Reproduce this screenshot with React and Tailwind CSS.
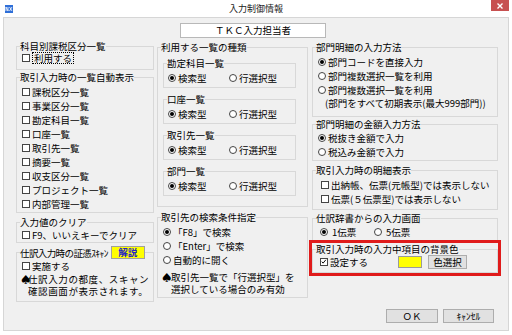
import React from "react";

function Box({ checked }) {
  return (
    <span className="relative inline-block w-[8px] h-[8px] border border-[#444] bg-white shrink-0">
      {checked && (
        <svg viewBox="0 0 8 8" className="absolute left-0 top-0 w-[6px] h-[6px]">
          <path d="M1 3.5 L2.8 5.5 L6.5 1" fill="none" stroke="#000" strokeWidth="1.3" />
        </svg>
      )}
    </span>
  );
}

function Radio({ on }) {
  return (
    <span className="inline-flex items-center justify-center w-[8px] h-[8px] rounded-full border border-[#444] bg-white shrink-0">
      {on && <span className="w-[4px] h-[4px] rounded-full bg-black" />}
    </span>
  );
}

function Check({ label, checked }) {
  return (
    <div className="flex items-center h-[14px] gap-[2px]">
      <Box checked={checked} />
      <span>{label}</span>
    </div>
  );
}

function RadioRow({ label, on }) {
  return (
    <div className="flex items-center h-[14px] gap-[2px]">
      <Radio on={on} />
      <span>{label}</span>
    </div>
  );
}

function Group({ legend, className, children }) {
  return (
    <fieldset className={className}>
      <legend className="ml-[3px] leading-[12px] whitespace-nowrap">{legend}</legend>
      {children}
    </fieldset>
  );
}

export default function App() {
  return (
    <div className="w-[512px] h-[335px] bg-white overflow-hidden text-[9.5px] text-black font-['Noto_Sans_CJK_JP','Noto_Sans',sans-serif]">
      {/* title bar */}
      <div className="h-[17px] flex items-start">
        <svg viewBox="0 0 8 8" className="ml-[5px] mt-[5px] w-[8px] h-[8px] shrink-0">
          <rect width="8" height="8" fill="#2f6fd8" />
          <path d="M1 6 V2 L3 6 V2 M4.5 2 L7 6 M7 2 L4.5 6" stroke="#fff" strokeWidth="0.8" fill="none" />
        </svg>
        <div className="flex-1 text-center pl-[8px] pt-[3px] leading-[12px] text-[9px] text-[#222]">入力制御情報</div>
        <div className="mr-[3px] w-[18px] h-[11px] bg-[#c75050] flex items-center justify-center">
          <svg viewBox="0 0 6 6" className="w-[6px] h-[6px]">
            <path d="M0.5 0.5 L5.5 5.5 M5.5 0.5 L0.5 5.5" stroke="#fff" strokeWidth="1.4" />
          </svg>
        </div>
      </div>

      {/* body */}
      <div className="mx-[3px] h-[314px] border border-[#d6d6d6] bg-[#f0f0f0]">
        <div className="mt-[5px] ml-[176px] w-[146px] h-[15px] border border-[#b8b8b8] bg-white flex items-center justify-center leading-[13px]">
          ＴＫＣ入力担当者
        </div>

        <div className="flex mt-[3px] pl-[12px]">
          {/* left column */}
          <div className="w-[138px] flex flex-col">
            <Group legend="科目別課税区分一覧" className="-mt-[1px] h-[30px] border border-[#d8d8d8]">
              <div className="pl-[5px] flex items-center h-[12px] gap-[2px]">
                <Box />
                <span className="border border-dotted border-black leading-[10px] px-[1px]">利用する</span>
              </div>
            </Group>
            <Group legend="取引入力時の一覧自動表示" className="mt-[1px] h-[142px] border border-[#d8d8d8]">
              <div className="pl-[5px] pt-[2px]">
                <Check label="課税区分一覧" />
                <Check label="事業区分一覧" />
                <Check label="勘定科目一覧" />
                <Check label="口座一覧" />
                <Check label="取引先一覧" />
                <Check label="摘要一覧" />
                <Check label="収支区分一覧" />
                <Check label="プロジェクト一覧" />
                <Check label="内部管理一覧" />
              </div>
            </Group>
            <Group legend="入力値のクリア" className="mt-[3px] h-[27px] border border-[#d8d8d8]">
              <div className="pl-[5px]">
                <Check label="F9、いいえキーでクリア" />
              </div>
            </Group>
            <fieldset className="mt-[3px] h-[56px] border border-[#d8d8d8]">
              <legend className="ml-[3px] leading-[12px] whitespace-nowrap">
                <span className="inline-flex items-center">
                  <span className="tracking-[-0.6px]">仕訳入力時の証憑ｽｷｬﾝ</span>
                  <span className="ml-[3px] w-[34px] h-[13px] bg-[#ffff00] border border-[#a0a0a0] flex items-center justify-center text-[#2323c8] font-bold leading-[11px]">
                    解説
                  </span>
                </span>
              </legend>
              <div className="pl-[5px]">
                <Check label="実施する" />
              </div>
              <div className="flex pl-[4px] leading-[12px] tracking-[0.6px]">
                <span className="w-[7px] shrink-0 tracking-normal">♠</span>
                <div>
                  仕訳入力の都度、スキャン
                  <br />
                  確認画面が表示されます。
                </div>
              </div>
            </fieldset>
          </div>

          {/* middle column */}
          <div className="ml-[3px] w-[151px] flex flex-col">
            <Group legend="利用する一覧の種類" className="h-[166px] border border-[#d8d8d8]">
              <div className="pl-[5px] pt-[4px] flex flex-col gap-[5px]">
                {["勘定科目一覧", "口座一覧", "取引先一覧", "部門一覧"].map((t) => (
                  <fieldset key={t} className="w-[133px] h-[31px] border border-[#d8d8d8]">
                    <legend className="ml-[3px] leading-[12px]">{t}</legend>
                    <div className="pl-[4px] pt-[2px] flex">
                      <div className="w-[61px]">
                        <RadioRow label="検索型" on />
                      </div>
                      <RadioRow label="行選択型" />
                    </div>
                  </fieldset>
                ))}
              </div>
            </Group>
            <Group legend="取引先の検索条件指定" className="mt-[4px] h-[87px] border border-[#d8d8d8]">
              <div className="pl-[5px] pt-[2px]">
                <RadioRow label="「F8」で検索" on />
                <RadioRow label="「Enter」で検索" />
                <RadioRow label="自動的に開く" />
              </div>
              <div className="flex pl-[4px] mt-[4px] leading-[12px]">
                <span className="w-[9px] shrink-0">♠</span>
                <div>
                  取引先一覧で「行選択型」を
                  <br />
                  選択している場合のみ有効
                </div>
              </div>
            </Group>
          </div>

          {/* right column */}
          <div className="ml-[4px] w-[186px] flex flex-col">
            <Group legend="部門明細の入力方法" className="h-[76px] border border-[#d8d8d8]">
              <div className="pl-[5px] pt-[2px]">
                <RadioRow label="部門コードを直接入力" on />
                <RadioRow label="部門複数選択一覧を利用" />
                <RadioRow label="部門複数選択一覧を利用" />
                <div className="pl-[7px] leading-[12px] whitespace-nowrap">(部門をすべて初期表示(最大999部門))</div>
              </div>
            </Group>
            <Group legend="部門明細の金額入力方法" className="mt-[1px] h-[43px] border border-[#d8d8d8]">
              <div className="pl-[5px] pt-[1px]">
                <RadioRow label="税抜き金額で入力" on />
                <RadioRow label="税込み金額で入力" />
              </div>
            </Group>
            <Group legend="取引入力時の明細表示" className="mt-[3px] h-[46px] border border-[#d8d8d8]">
              <div className="pl-[8px] pt-[2px] whitespace-nowrap">
                <Check label="出納帳、伝票(元帳型)では表示しない" />
                <Check label="伝票(５伝票型)では表示しない" />
              </div>
            </Group>
            <Group legend="仕訳辞書からの入力画面" className="mt-[2px] h-[29px] border border-[#d8d8d8]">
              <div className="pl-[7px] pt-[1px] flex">
                <div className="w-[54px] flex items-center h-[14px] gap-[4px]">
                  <Radio on />
                  <span>1伝票</span>
                </div>
                <div className="flex items-center h-[14px] gap-[4px]">
                  <Radio />
                  <span>5伝票</span>
                </div>
              </div>
            </Group>
            <div className="-mt-[1px] -mx-[3px] border-[3px] border-[#e01b1b]">
              <Group legend="取引入力時の入力中項目の背景色" className="h-[30px] border border-[#d8d8d8]">
                <div className="pl-[7px] flex items-center h-[14px]">
                  <div className="w-[78px]">
                    <Check label="設定する" checked />
                  </div>
                  <span className="w-[24px] h-[12px] bg-[#ffff00] border border-[#9a9a9a]" />
                  <span className="ml-[6px] w-[39px] h-[14px] bg-[#e1e1e1] border border-[#adadad] flex items-center justify-center leading-[12px]">
                    色選択
                  </span>
                </div>
              </Group>
            </div>
            <div className="mt-[33px] flex justify-end gap-[5px] pr-[4px]">
              <div className="w-[52px] h-[14px] bg-[#e1e1e1] border border-[#adadad] flex items-center justify-center leading-[12px]">
                ＯＫ
              </div>
              <div className="w-[51px] h-[14px] bg-[#e1e1e1] border border-[#adadad] flex items-center justify-center leading-[12px]">
                ｷｬﾝｾﾙ
              </div>
            </div>
          </div>
        </div>
      </div>
    </div>
  );
}
